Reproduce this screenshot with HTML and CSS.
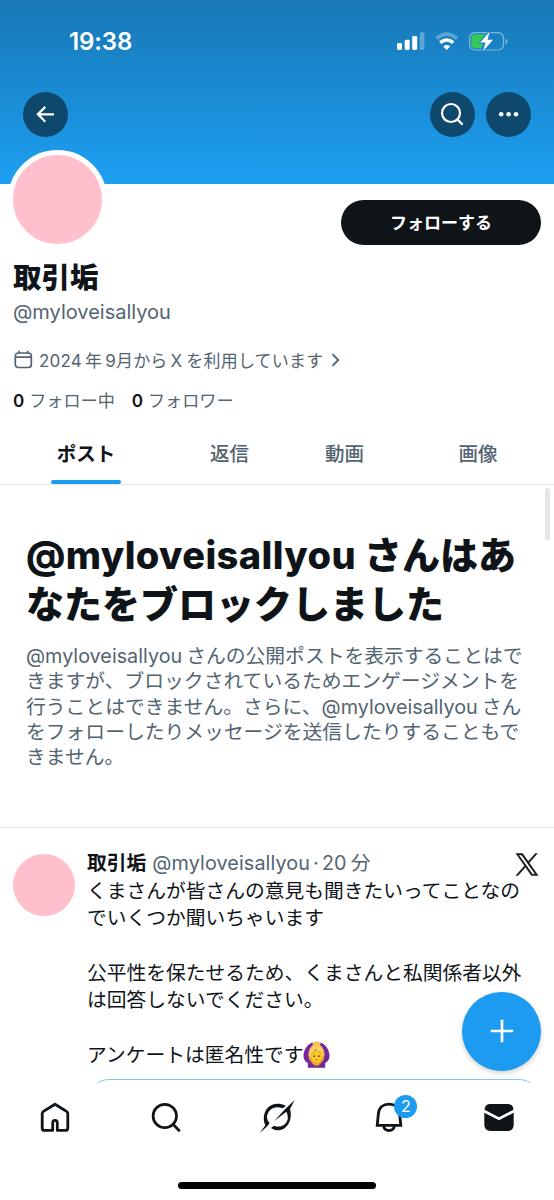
FILE: index.html
```html
<!DOCTYPE html>
<html lang="ja">
<head>
<meta charset="utf-8">
<title>プロフィール</title>
<link rel="stylesheet" href="styles.css">
</head>
<body>
<div class="screen">
  <header class="banner">
    <div class="status">
      <span class="clock">19:38</span>
      <svg class="status-icons" width="112" height="22" viewBox="396 30 112 22">
        <g fill="#fff">
          <rect x="397" y="43" width="5" height="7" rx="1.4"/>
          <rect x="404.7" y="39.7" width="5" height="10.3" rx="1.4"/>
          <rect x="412.2" y="36" width="5" height="14" rx="1.4"/>
          <rect x="419.8" y="32.3" width="4.6" height="17.7" rx="1.4" opacity=".3"/>
        </g>
        <path d="M436.5 38.5Q446.5 29.8 457 38.5" fill="none" stroke="#fff" stroke-width="3.6" opacity=".3"/>
        <path d="M440.2 42.7Q446.7 37.2 453.2 42.7" fill="none" stroke="#fff" stroke-width="3.5"/>
        <path d="M443.2 46.4Q446.7 43.6 450.2 46.4L446.7 50Z" fill="#fff"/>
        <rect x="469.6" y="32.6" width="34" height="17.4" rx="5.6" fill="none" stroke="#fff" stroke-width="1.2" opacity=".45"/>
        <path d="M475 34.3h11.5l-6.5 9h3.5l-2 5H475a3.6 3.6 0 0 1-3.6-3.6v-6.8a3.6 3.6 0 0 1 3.6-3.6z" fill="#34c759"/>
        <path d="M505.8 38.5v5.5q1.7-.8 1.7-2.7t-1.7-2.8z" fill="#fff" opacity=".5"/>
        <path d="M489.8 31.5L480.2 42.6h5.4l-2.7 8.6L493 39.7h-5.5z" fill="#fff" stroke="#1c85c7" stroke-width="2.4" paint-order="stroke" stroke-linejoin="round"/>
      </svg>
    </div>
    <div class="toolbar">
      <span class="round"><svg width="45" height="45" viewBox="0 0 45 45" fill="none" stroke="#fff" stroke-width="2.2"><path d="M31 22.3H15M22.3 14.9l-7.4 7.4 7.4 7.4"/></svg></span>
      <span class="round push"><svg width="45" height="45" viewBox="0 0 45 45" fill="none" stroke="#fff" stroke-width="2.2"><circle cx="21" cy="21" r="9"/><path d="M27.4 27.4l5.2 5.2"/></svg></span>
      <span class="round"><svg width="45" height="45" viewBox="0 0 45 45" fill="#fff"><circle cx="15.2" cy="22.2" r="2.3"/><circle cx="22.6" cy="22.2" r="2.3"/><circle cx="30" cy="22.2" r="2.3"/></svg></span>
    </div>
  </header>

  <section class="profile">
    <div class="profile-top">
      <div class="avatar"></div>
      <button class="follow">フォローする</button>
    </div>
    <h1 class="name">取引垢</h1>
    <div class="handle">@myloveisallyou</div>
    <div class="joined">
      <svg width="20" height="20" viewBox="0 0 20 20" fill="none" stroke="#536471" stroke-width="1.7"><rect x="2.3" y="3" width="16" height="14.5" rx="3"/><path d="M2.3 7.2h16M6 .8v3M14.7 .8v3"/></svg>
      <span class="joined-text">2024<span class="gap-s"></span>年<span class="gap-s"></span>9月から<span class="gap-s"></span>X<span class="gap"></span>を利用しています</span>
      <svg class="chev" width="10" height="14" viewBox="0 0 10 14" fill="none" stroke="#536471" stroke-width="1.9"><path d="M1.5 1.2L7.3 7l-5.8 5.8"/></svg>
    </div>
    <div class="counts">
      <span><b>0</b>フォロー中</span>
      <span><b>0</b>フォロワー</span>
    </div>
  </section>

  <nav class="tabs">
    <span class="tab active">ポスト</span>
    <span class="tab">返信</span>
    <span class="tab">動画</span>
    <span class="tab">画像</span>
  </nav>

  <section class="blocked">
    <h2><span class="latin">@myloveisallyou</span><span class="gap"></span>さんはあ<br>なたをブロックしました</h2>
    <p>@myloveisallyou<span class="gap"></span>さんの公開ポストを表示することはで<br>きますが、ブロックされているためエンゲージメントを<br>行うことはできません。さらに、@myloveisallyou<span class="gap"></span>さん<br>をフォローしたりメッセージを送信したりすることもで<br>きません。</p>
    <span class="scrollbar"></span>
  </section>

  <article class="post">
    <div class="post-avatar"></div>
    <div class="post-main">
      <div class="post-head">
        <b>取引垢</b>
        <span class="meta">@myloveisallyou<span class="dot">·</span>20<span class="gap"></span>分</span>
        <svg class="xlogo" width="24" height="25" viewBox="0 0 24 24" fill="#0f1419" stroke="#0f1419" stroke-width=".5"><path d="M14.095 10.316L22.286 1h-1.94L13.23 9.088 7.551 1H1l8.59 12.231L1 23h1.94l7.51-8.543L16.449 23H23zM11.437 13.338l-.872-1.218L3.64 2.432h2.982l5.59 7.821.867 1.219 7.265 10.166h-2.981z"/></svg>
      </div>
      <p class="post-text">くまさんが皆さんの意見も聞きたいってことなの<br>でいくつか聞いちゃいます<br><br>公平性を保たせるため、くまさんと私関係者以外<br>は回答しないでください。<br><br>アンケートは匿名性です<svg class="emoji" width="27" height="27" viewBox="0 0 27 27"><path d="M9.500 1.500C4.500 3 .5 9 .5 15C.6 18.500 2.500 21 4.800 22L4.800 26.700H22.200V22C24.500 21 26.400 18.500 26.500 15C26.500 9 22.500 3 17.500 1.500L16.500 3.500C19.800 6 21.500 10 21.500 14L18 21H9L5.500 14C5.500 10 7.200 6 10.500 3.500Z" fill="#76279a"/><path d="M9.500 20h8l.3 2.800Q13.500 27 9.200 22.800Z" fill="#e89f1c"/><path d="M6 18C4.600 8 8 4 13.500 4S22.400 8 21 18Q19.500 21.500 16 22.500H11Q7.500 21.500 6 18Z" fill="#e8a52c"/><path d="M9 2Q13.500-1 18 2L16.300 4.600H10.700Z" fill="#f8c050"/><path d="M8.300 12.500Q13.500 7 18.700 12.500V16.500Q18 21.500 13.500 21.900 9 21.500 8.300 16.500Z" fill="#fdc928"/><path d="M6.600 17C5.800 8.500 8.500 4.600 13.500 4.600S21.200 8.500 20.400 17Q19.200 14.500 18 12 14.500 11 12.500 8.300 11 12 8.600 13.300 8 15.500 6.600 17Z" fill="#f8cf62"/><path d="M8.500 13.300Q11.200 12 12.500 8.300 14.500 11.200 18 12" fill="none" stroke="#c9851b" stroke-width=".6"/><circle cx="11.200" cy="15.200" r=".85" fill="#56341b"/><circle cx="15.800" cy="15.200" r=".85" fill="#56341b"/><path d="M12.200 19Q13.500 18.400 14.800 19" fill="none" stroke="#b0522a" stroke-width=".8"/></svg></p>
      <div class="poll"></div>
    </div>
    <button class="fab" aria-label="ポスト"><svg width="24" height="24" viewBox="0 0 24 24" stroke="#fff" stroke-width="2.7"><path d="M12 .8v22.4M.8 12h22.4"/></svg></button>
  </article>

  <nav class="bottom">
    <span class="item"><svg width="36" height="36" viewBox="0 0 36 36" fill="none" stroke="#0f1419" stroke-width="2.8" stroke-linejoin="round"><path d="M15.7 31.4H7.7q-2.500 0-2.500-2.500V14.700q0-1.500 1.300-2.300L18 5.200l11.500 7.200q1.300.8 1.300 2.300v14.200q0 2.500-2.500 2.500h-8v-7.200q0-2.800-2.300-2.800t-2.300 2.800z"/></svg></span>
    <span class="item"><svg width="36" height="36" viewBox="0 0 36 36" fill="none" stroke="#0f1419" stroke-width="2.7"><circle cx="16.8" cy="17" r="11.7"/><path d="M25 25.3l6.800 6.900"/></svg></span>
    <span class="item"><svg width="36" height="36" viewBox="17 117 108 108" fill="#0f1419"><path d="M19 220L36 196C22 164 42 125 82 132Q91 134 98 138L88 145C64 134 40 151 41 173Q42 183 49 189L43 197Z"/><path d="M124 120L110 147C120 182 98 217 66 210Q59 208 53 204L62 197C85 207 107 189 103 167Q102 160 99 155L62 184L95 148Z"/></svg></span>
    <span class="item"><svg width="36" height="36" viewBox="0 0 36 36" fill="none" stroke="#0f1419" stroke-width="2.8"><path d="M7.2 26.4L8.4 14.5C9 8.500 13.200 5.200 19 5.200s10 3.300 10.600 9.300l1.200 11.900zM13.500 27c.7 3 2.800 4.500 5.500 4.500s4.800-1.500 5.500-4.500"/></svg><span class="badge">2</span></span>
    <span class="item"><svg width="36" height="36" viewBox="0 0 36 36" fill="#0f1419"><path d="M3.5 10.800Q3.800 5 9.500 5H26.500Q32.200 5 32.500 10.800L18 18.200Z"/><path d="M3.300 13.700L18 21.300 32.700 13.700V25.500Q32.700 32 26.500 32H9.500Q3.300 32 3.300 25.500Z"/></svg></span>
  </nav>
  <div class="home-indicator"></div>
</div>
</body>
</html>
```
FILE: styles.css
```css
* { box-sizing: border-box; }

body {
  margin: 0;
  background: #fff;
  color: #0f1419;
  font-family: Inter, "Noto Sans CJK JP", sans-serif;
}

button {
  border: 0;
  padding: 0;
  font-family: inherit;
}

svg { display: block; }

.screen {
  width: 554px;
  height: 1200px;
  overflow: hidden;
  display: flex;
  flex-direction: column;
}

.gap { display: inline-block; width: 4px; }
.gap-s { display: inline-block; width: 3px; }

.banner {
  height: 184px;
  flex: none;
  background: linear-gradient(#1778b5, #1d9ff2);
}

.status {
  height: 91.5px;
  padding: 30px 46px 0 69px;
  display: flex;
  justify-content: space-between;
}

.clock {
  color: #fff;
  font-size: 24px;
  font-weight: 600;
  line-height: 24px;
  letter-spacing: -.1px;
}

.toolbar {
  display: flex;
  gap: 11px;
  padding: 0 23px 0 22.5px;
}

.round {
  width: 45px;
  height: 45px;
  border-radius: 50%;
  background: #0e486d;
}

.push { margin-left: auto; }

.profile {
  height: 238px;
  flex: none;
  padding: 0 13px;
}

.profile-top {
  display: flex;
  justify-content: space-between;
  height: 75px;
}

.avatar {
  width: 99.5px;
  height: 99.5px;
  margin: -34.5px 0 0 -5.5px;
  border: 5px solid #fff;
  border-radius: 50%;
  background: #ffc0cb;
}

.follow {
  width: 200px;
  height: 45px;
  margin-top: 16px;
  padding-bottom: 2px;
  border-radius: 23px;
  background: #0f1419;
  color: #fff;
  font-size: 17px;
  font-weight: 600;
}

.name {
  margin: 0;
  font-size: 28.5px;
  font-weight: 800;
  line-height: 38px;
}

.handle {
  color: #536471;
  font-size: 20px;
  line-height: 30px;
}

.joined {
  display: flex;
  align-items: center;
  height: 24px;
  margin-top: 21px;
  color: #536471;
  font-size: 17px;
}

.joined-text {
  margin-left: 6px;
  padding-bottom: 2px;
  letter-spacing: .2px;
}

.chev { margin-left: 8px; }

.counts {
  display: flex;
  gap: 17px;
  margin-top: 16.5px;
  color: #536471;
  font-size: 17.1px;
  line-height: 24px;
}

.counts b {
  margin-right: 5px;
  color: #0f1419;
  font-weight: 600;
}

.tabs {
  flex: none;
  height: 63px;
  display: grid;
  grid-template-columns: 172px 115px 115px 152px;
  justify-items: center;
  border-bottom: 1px solid #e6ebed;
}

.tab {
  position: relative;
  padding-top: 19px;
  color: #536471;
  font-size: 19.5px;
  font-weight: 500;
  line-height: 26px;
}

.active {
  width: 70px;
  height: 62px;
  text-align: center;
  color: #0f1419;
  font-weight: 700;
}

.active::after {
  content: "";
  position: absolute;
  left: 0;
  right: 0;
  bottom: 0;
  height: 4px;
  border-radius: 2px;
  background: #1d9bf0;
}

.blocked {
  position: relative;
  flex: none;
  height: 343px;
  padding: 46px 20px 0 26px;
  border-bottom: 1px solid #e3e7e9;
}

.blocked h2 {
  margin: 0;
  font-size: 38px;
  font-weight: 800;
  line-height: 49px;
  white-space: nowrap;
}

.latin { letter-spacing: .4px; }

.blocked h2 .gap { width: 8px; }

.blocked p {
  margin: 15px 0 0;
  color: #536471;
  font-size: 19.8px;
  line-height: 25.3px;
  white-space: nowrap;
}

.scrollbar {
  position: absolute;
  top: 3px;
  right: 4px;
  width: 5px;
  height: 52px;
  border-radius: 3px;
  background: #e5e5e5;
}

.post {
  position: relative;
  flex: none;
  height: 255px;
  padding: 22px 13px 0;
  display: flex;
  gap: 12px;
}

.post-avatar {
  flex: none;
  width: 62px;
  height: 62px;
  margin-top: 4px;
  border-radius: 50%;
  background: #ffc0cb;
}

.post-main {
  flex: 1;
  height: 233px;
  overflow: hidden;
}

.post-head {
  display: flex;
  height: 28px;
  font-size: 19.8px;
  line-height: 27px;
}

.post-head b { font-weight: 700; }

.meta {
  margin-left: 6px;
  color: #536471;
  letter-spacing: .1px;
}

.dot { margin: 0 3px; }

.xlogo { margin: 1.5px 2px 0 auto; }

.post-text {
  margin: 0;
  font-size: 19.75px;
  line-height: 27.3px;
  white-space: nowrap;
}

.emoji {
  display: inline-block;
  margin-top: -2px;
  vertical-align: -6px;
}

.poll {
  height: 60px;
  margin-top: 10px;
  border: 1px solid #8ac6f2;
  border-radius: 22px;
}

.fab {
  position: absolute;
  left: 462px;
  top: 163.5px;
  width: 79px;
  height: 79px;
  display: grid;
  place-items: center;
  border-radius: 50%;
  background: #1d9bf0;
  box-shadow: 0 2px 5px #0003;
}

.bottom {
  flex: none;
  height: 99px;
  display: grid;
  grid-template-columns: repeat(5, 1fr);
  justify-items: center;
  padding-top: 16px;
}

.item {
  position: relative;
  height: 36px;
}

.badge {
  position: absolute;
  left: 24.5px;
  top: -4px;
  width: 23px;
  height: 23px;
  border-radius: 50%;
  background: #1d9bf0;
  color: #fff;
  font-size: 16px;
  line-height: 23px;
  text-align: center;
}

.home-indicator {
  flex: none;
  width: 198px;
  height: 7px;
  align-self: center;
  border-radius: 4px;
  background: #000;
}
```
